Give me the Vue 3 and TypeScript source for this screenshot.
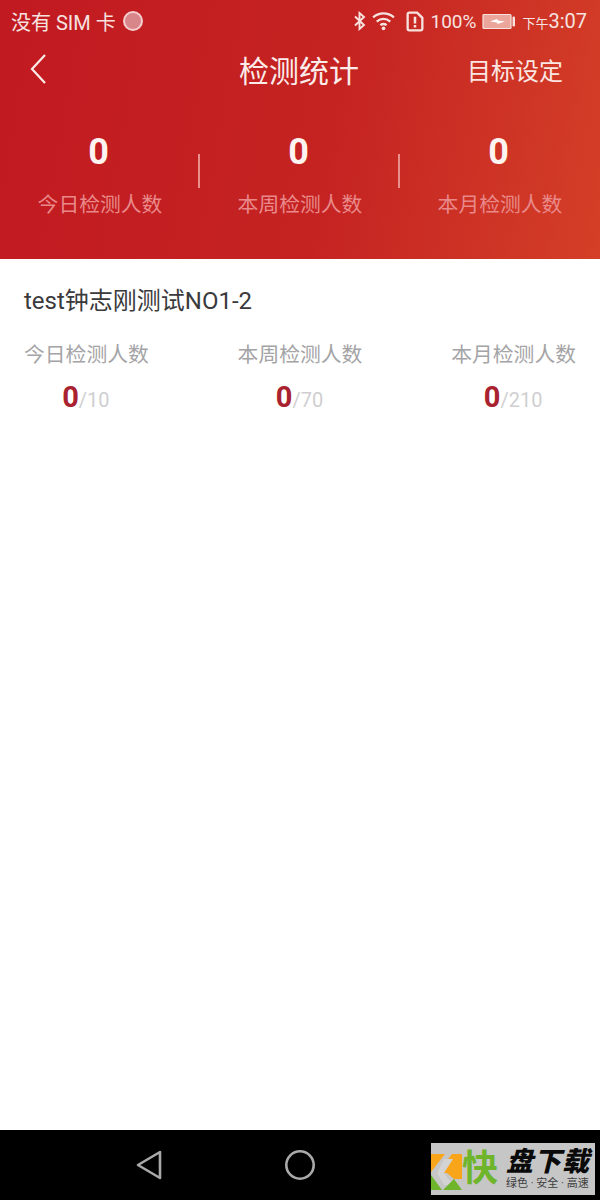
<script setup lang="ts">
const topStats = ['今日检测人数', '本周检测人数', '本月检测人数']
const targets = [
  { label: '今日检测人数', total: 10 },
  { label: '本周检测人数', total: 70 },
  { label: '本月检测人数', total: 210 },
]
</script>

<template>
  <div class="page">
    <header class="head">
      <div class="status">
        <div class="status-left">
          <span>没有 SIM 卡</span>
          <i class="rec"></i>
        </div>
        <div class="status-right">
          <svg class="ic-bt" width="14" height="20" viewBox="0 0 14 20" fill="none" stroke="#f6e3e0" stroke-width="1.9">
            <path d="M2 5.500 11 14l-4.500 4V2l4.500 4L2 14.500" />
          </svg>
          <svg class="ic-wifi" width="25" height="22" viewBox="0 0 24 20" fill="none" stroke="#f6e3e0" stroke-width="2.200">
            <path d="M2 6.500C8 1.500 16 1.500 22 6.500M5.500 10.500c4-3.300 9-3.300 13 0M9 14c1.800-1.400 4.200-1.400 6 0" />
            <circle cx="12" cy="17" r="1.800" fill="#f6e3e0" stroke="none" />
          </svg>
          <svg class="ic-sim" width="18" height="21" viewBox="0 0 17 20">
            <path d="M3 1.500h7.500L15.500 6.500V17a1.500 1.500 0 0 1-1.500 1.500H3A1.500 1.500 0 0 1 1.500 17V3A1.500 1.500 0 0 1 3 1.500Z" fill="none" stroke="#f6e3e0" stroke-width="2.200" />
            <path d="M7.300 5.500h2.400v6.500H7.300zM7.300 13.300h2.400v2.300H7.300z" fill="#f6e3e0" />
          </svg>
          <span class="pct">100%</span>
          <svg class="ic-bat" width="33" height="17" viewBox="0 0 33 16">
            <rect x="1" y="1" width="28" height="14" rx="1" fill="#eba59b" stroke="#f6e3e0" stroke-width="1.200" />
            <path d="M8 8 15 5.500 16 7 23 8 15.500 10.500 15 9Z" fill="#fff" />
            <rect x="30.500" y="3" width="2.500" height="10" rx="1" fill="#f6e3e0" />
          </svg>
          <span class="time"><small>下午</small>3:07</span>
        </div>
      </div>

      <div class="nav">
        <svg class="back" width="20" height="34" viewBox="0 0 20 34" fill="none" stroke="#fbecea" stroke-width="2.200">
          <path d="M16 3 3 17 16 31" />
        </svg>
        <h1>检测统计</h1>
        <span class="target-link">目标设定</span>
      </div>

      <div class="totals">
        <div v-for="label in topStats" :key="label" class="total">
          <b>0</b>
          <span>{{ label }}</span>
        </div>
      </div>
    </header>

    <main class="body">
      <h2>test钟志刚测试NO1-2</h2>
      <div class="rows">
        <div v-for="t in targets" :key="t.label" class="cell">
          <span class="cell-label">{{ t.label }}</span>
          <span class="cell-val"><b>0</b>/{{ t.total }}</span>
        </div>
      </div>
    </main>

    <footer class="sysnav">
      <svg width="30" height="32" viewBox="0 0 30 32" fill="none" stroke="#a9a9a9" stroke-width="2.600" stroke-linejoin="round">
        <path d="M3 16 25 3v26Z" />
      </svg>
      <svg width="32" height="32" viewBox="0 0 32 32" fill="none" stroke="#a9a9a9" stroke-width="2.600">
        <circle cx="16" cy="16" r="13.700" />
      </svg>
      <div class="mark">
        <svg width="31" height="50" viewBox="0 0 31 50">
          <path d="M0 10H14L0 28Z" fill="#f9a51a" />
          <path d="M6 29 21 10H31V35H23L16 29Z" fill="#f9a51a" />
          <path d="M13 15H22L13 29 22 41H13L6 29Z" fill="#d3d3d3" />
          <path d="M0 46V31L11 46Z" fill="#6fb52c" />
          <path d="M12 46 23 35 31 46Z" fill="#6fb52c" />
        </svg>
        <span class="kuai">快</span>
        <div class="mark-text">
          <strong>盘下载</strong>
          <span>绿色 · 安全 · 高速</span>
        </div>
      </div>
    </footer>
  </div>
</template>

<style>
body {
  margin: 0;
}
</style>

<style scoped>
.page {
  position: relative;
  display: flex;
  flex-direction: column;
  width: 600px;
  height: 1200px;
  overflow: hidden;
  background: #fff;
  font-family: Roboto, "Noto Sans CJK SC", sans-serif;
}

.head {
  height: 259px;
  box-sizing: border-box;
  background: linear-gradient(100deg, #c11a21 0%, #c52322 55%, #d43f27 100%);
  color: #fff;
}

.status {
  display: flex;
  justify-content: space-between;
  align-items: center;
  height: 42px;
  padding: 0 13px 0 11px;
  color: #f6e3e0;
}

.status-left {
  display: flex;
  align-items: center;
  gap: 7px;
  font-size: 20px;
}

.rec {
  width: 20px;
  height: 20px;
  box-sizing: border-box;
  border: 2px solid #f4cfcf;
  border-radius: 50%;
  background: #d9868a;
}

.status-right {
  display: flex;
  align-items: center;
}

.ic-wifi {
  margin-left: 4px;
}

.ic-sim {
  margin-left: 10px;
}

.pct {
  margin-left: 6px;
  font-size: 19px;
}

.ic-bat {
  margin-left: 6px;
}

.time {
  margin-left: 7px;
  font-size: 20px;
}

.time small {
  font-size: 13px;
}

.nav {
  display: grid;
  grid-template-columns: 1fr auto 1fr;
  align-items: center;
  height: 54px;
  padding: 0 37px 0 29px;
}

.nav h1 {
  margin: 0 0 0 6px;
  font-size: 30px;
  font-weight: 400;
  color: #fbecea;
}

.target-link {
  justify-self: end;
  font-size: 24px;
  color: #fbe6e2;
}

.totals {
  display: grid;
  grid-template-columns: repeat(3, 1fr);
  margin-top: 35px;
}

.total {
  position: relative;
  display: flex;
  flex-direction: column;
  align-items: center;
  gap: 18px;
}

.total + .total::before {
  content: "";
  position: absolute;
  left: -2px;
  top: 23px;
  width: 2px;
  height: 34px;
  background: #eb8f8c;
}

.total b {
  margin-right: 3px;
  font-size: 36px;
  line-height: 42px;
  font-weight: 700;
  color: #fdf3f1;
}

.total span {
  font-size: 20.800px;
  line-height: 28px;
  color: #e9898a;
}

.body {
  flex: 1;
  padding: 24px 24px 0;
}

.body h2 {
  margin: 0;
  font-size: 24px;
  line-height: 36px;
  font-weight: 400;
  color: #3a3a3c;
}

.rows {
  display: flex;
  justify-content: space-between;
  margin-top: 22px;
}

.cell {
  display: flex;
  flex-direction: column;
  align-items: center;
  gap: 13px;
}

.cell-label {
  font-size: 20.800px;
  line-height: 28px;
  color: #a4a4a6;
}

.cell-val {
  margin-right: 1px;
  font-size: 20px;
  line-height: 30px;
  color: #cfcfd1;
}

.cell-val b {
  font-size: 29px;
  font-weight: 700;
  color: #a9222f;
}

.sysnav {
  position: relative;
  display: flex;
  align-items: center;
  gap: 119px;
  height: 70px;
  padding-left: 135px;
  background: #000;
}

.mark {
  position: absolute;
  left: 431px;
  top: 13px;
  display: flex;
  align-items: center;
  width: 164px;
  height: 52px;
  background: #c6c6c6;
}

.kuai {
  font-size: 36px;
  line-height: 1;
  font-weight: 700;
  color: #6fb52c;
}

.mark-text {
  display: flex;
  flex-direction: column;
  align-items: flex-start;
  margin-left: 8px;
}

.mark-text strong {
  font-size: 27px;
  line-height: 30px;
  font-style: italic;
  font-weight: 900;
  letter-spacing: 1px;
  color: #0a0a0a;
}

.mark-text span {
  font-size: 11px;
  line-height: 14px;
  color: #3d3d3d;
}
</style>
